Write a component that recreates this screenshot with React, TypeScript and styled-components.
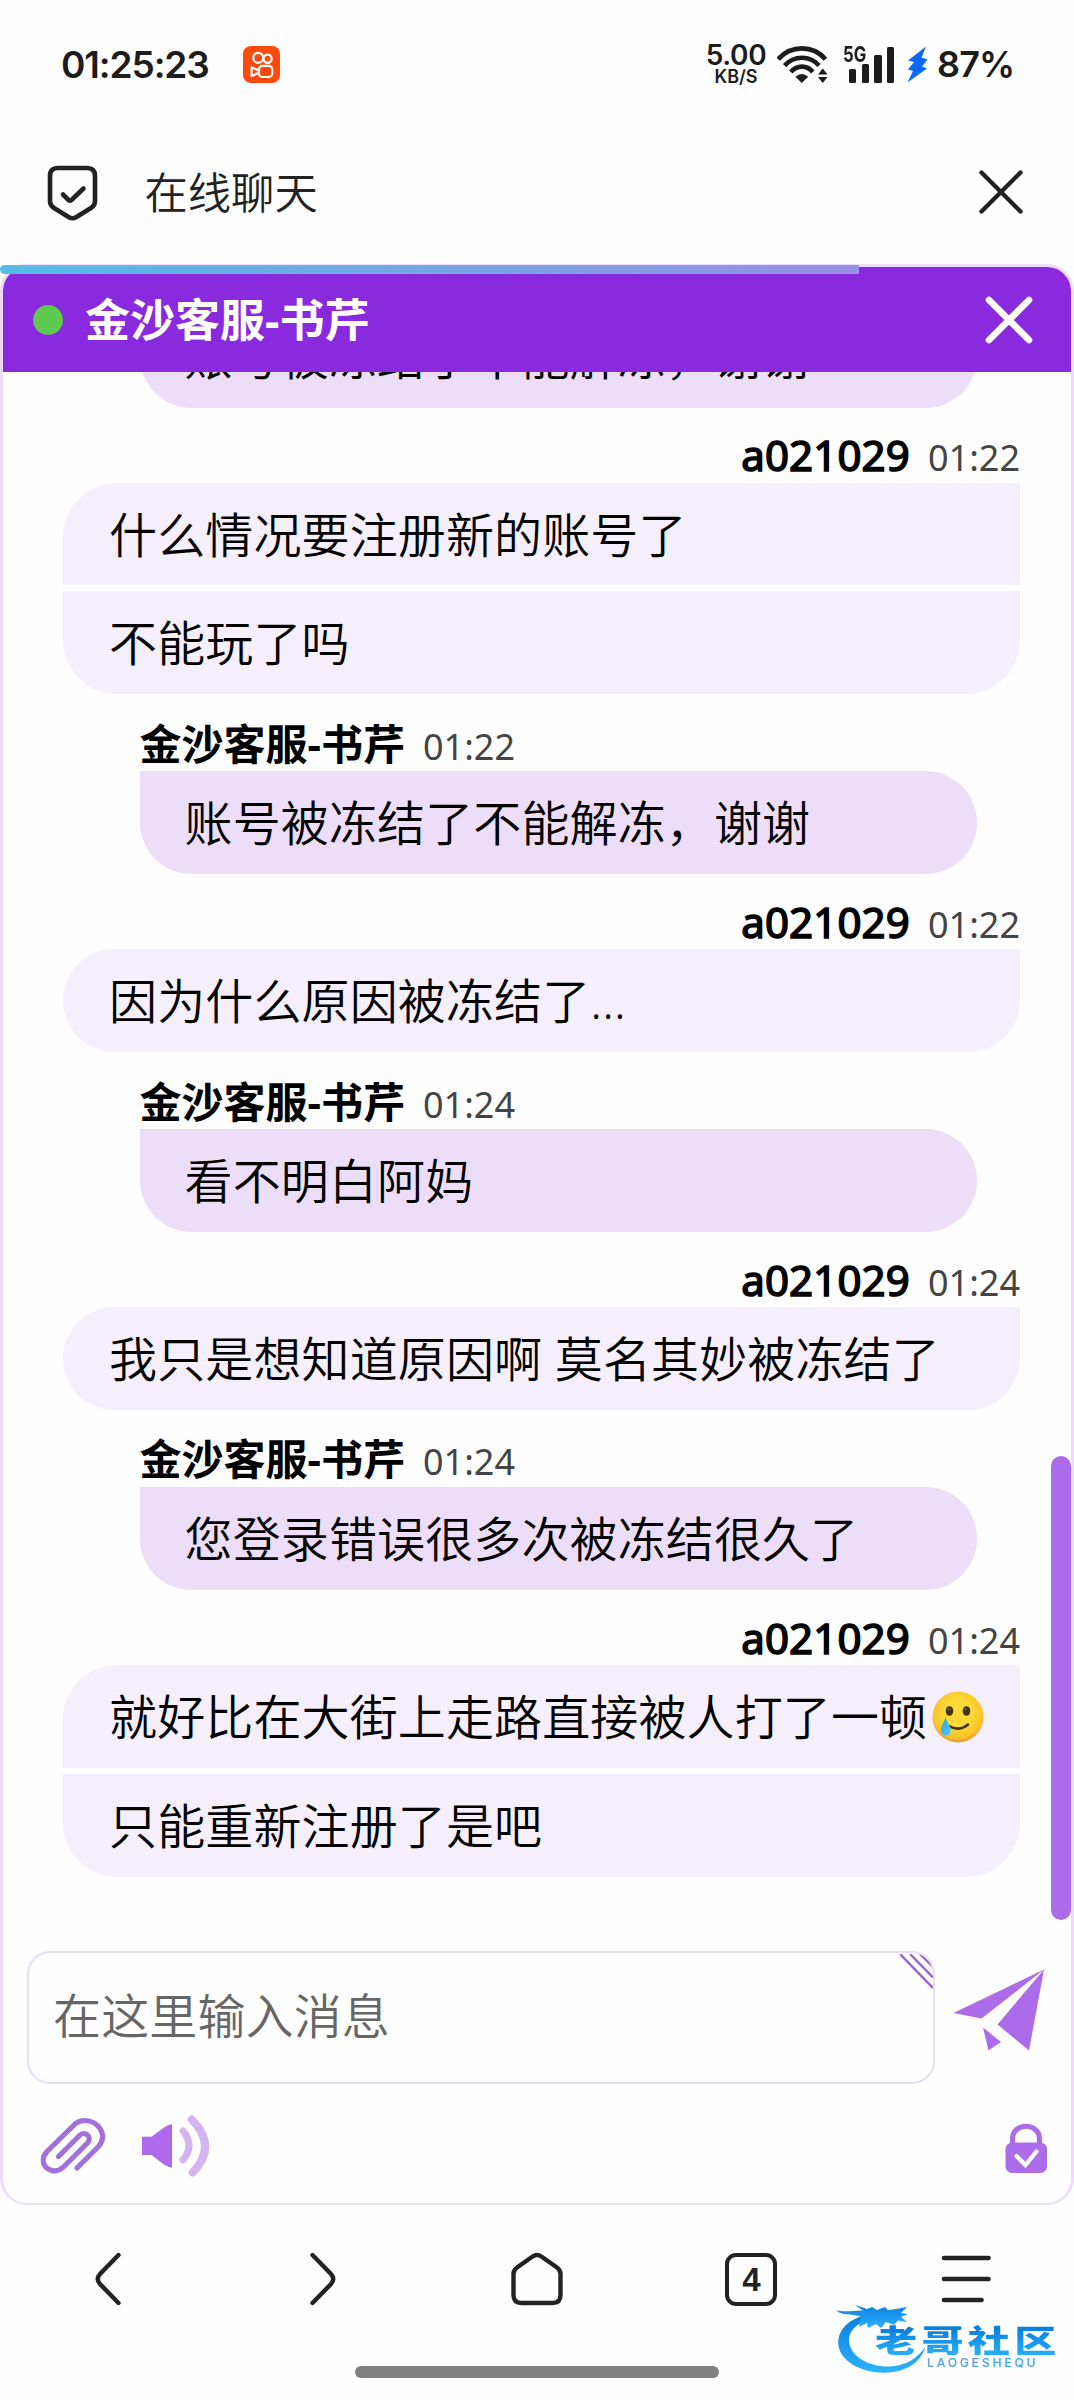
import React from 'react';
import styled, { createGlobalStyle } from 'styled-components';

const GlobalStyle = createGlobalStyle`
  * { box-sizing: border-box; }
  body { margin: 0; background: #fefefe; }
`;

const cjk = `"Noto Sans", "Noto Sans CJK SC", sans-serif`;
const ui = `Inter, "Noto Sans CJK SC", sans-serif`;
const ink = '#1c1c1c';
const violet = '#ac6be9';

const Page = styled.div`
  width: 1074px;
  height: 2400px;
  display: flex;
  flex-direction: column;
  background: #fefefe;
  font-family: ${cjk};
  overflow: hidden;
  position: relative;
`;

/* ---------- status bar ---------- */
const StatusBar = styled.div`
  height: 128px;
  padding: 0 62px 0 61px;
  display: flex;
  align-items: center;
  justify-content: space-between;
  color: ${ink};
  font-family: ${ui};
`;
const StatusSide = styled.div`
  display: flex;
  align-items: center;
`;
const Clock = styled.div`
  width: 182px;
  font-size: 37px;
  font-weight: 600;
  letter-spacing: -1.1px;
  white-space: nowrap;
`;
const Speed = styled.div`
  width: 62px;
  display: flex;
  flex-direction: column;
  align-items: center;
  white-space: nowrap;
`;
const SpeedValue = styled.span`
  font-size: 28px;
  line-height: 25px;
  font-weight: 600;
  letter-spacing: -0.4px;
`;
const SpeedUnit = styled.span`
  font-size: 18px;
  line-height: 17px;
  font-weight: 600;
`;
const Wifi = styled.svg`
  margin-left: 10px;
`;
const Signal = styled.div`
  position: relative;
  width: 52px;
  height: 37px;
  margin-left: 15px;
  display: flex;
  align-items: flex-end;
  gap: 5.3px;
  padding-left: 6px;
`;
const SignalBar = styled.span<{ $h: number }>`
  width: 7.4px;
  height: ${(p) => p.$h}px;
  border-radius: 1.5px;
  background: ${ink};
`;
const SignalLabel = styled.span`
  position: absolute;
  left: 0;
  top: -1px;
  font-size: 22px;
  line-height: 18px;
  font-weight: 700;
  transform: scaleX(0.76);
  transform-origin: 0 0;
`;
const Bolt = styled.svg`
  margin-left: 12px;
`;
const Battery = styled.div`
  width: 75px;
  font-size: 36px;
  font-weight: 600;
  letter-spacing: -0.9px;
  margin-left: 9px;
  white-space: nowrap;
`;

/* ---------- browser title bar ---------- */
const TitleBar = styled.div`
  height: 136px;
  padding: 0 50px 8px 46px;
  display: flex;
  align-items: center;
`;
const PageTitle = styled.div`
  flex: 1;
  margin: 2px 0 0 45.5px;
  font-size: 43.3px;
  line-height: 66px;
  font-weight: 350;
  color: #222;
`;
const Progress = styled.div`
  position: absolute;
  left: 0;
  top: 265px;
  width: 859px;
  height: 9px;
  border-radius: 5px 0 0 5px;
  background: linear-gradient(90deg, #54bce6, #7ba2e2 60%, #9a90e4);
`;

/* ---------- chat panel ---------- */
const Panel = styled.section`
  height: 1941px;
  display: flex;
  flex-direction: column;
  border: 3px solid #ecdcfa;
  border-bottom: 2px solid #e9e0f3;
  border-radius: 27px;
  overflow: hidden;
`;
const PanelHeader = styled.header`
  height: 105px;
  flex: none;
  padding: 0 37px 0 30px;
  display: flex;
  align-items: center;
  background: #8a2adf;
`;
const Online = styled.span`
  width: 30px;
  height: 30px;
  border-radius: 50%;
  background: #5dca4f;
  margin-top: 1px;
`;
const AgentTitle = styled.h1`
  flex: 1;
  margin: 0 0 0 22px;
  font-size: 45px;
  line-height: 68px;
  font-weight: 700;
  color: #fff;
`;
const Body = styled.div`
  position: relative;
  height: 1579px;
  flex: none;
  padding: 0 51px 74.4px 60px;
  display: flex;
  flex-direction: column;
  justify-content: flex-end;
  overflow: hidden;
`;
const Scrollbar = styled.div`
  position: absolute;
  right: 0;
  top: 1084px;
  width: 20px;
  height: 464px;
  border-radius: 10px;
  background: ${violet};
`;
const Group = styled.div<{ $agent?: boolean }>`
  flex: none;
  display: flex;
  flex-direction: column;
  gap: 6px;
  margin: ${(p) => (p.$agent ? '0 43px 0 76.5px' : '0')};
`;
const Meta = styled.div<{ $agent?: boolean }>`
  height: ${(p) => (p.$agent ? 77.4 : 75.2)}px;
  padding-top: ${(p) => (p.$agent ? 25.5 : 23.5)}px;
  margin-bottom: -6px;
  line-height: 48px;
  text-align: ${(p) => (p.$agent ? 'left' : 'right')};
  white-space: nowrap;
  color: #000;
`;
const Name = styled.span<{ $agent?: boolean }>`
  font-size: 42px;
  font-weight: ${(p) => (p.$agent ? 700 : 400)};
  letter-spacing: ${(p) => (p.$agent ? 0 : 0.15)}px;
  -webkit-text-stroke: ${(p) => (p.$agent ? 0 : 1.6)}px #000;
`;
const Time = styled.span`
  margin-left: 18px;
  font-size: 36px;
  color: #444;
`;
const Bubble = styled.div<{ $agent?: boolean; $first: boolean; $last: boolean }>`
  height: 102.7px;
  padding: 0 45px 0 ${(p) => (p.$agent ? 45 : 46)}px;
  background: ${(p) => (p.$agent ? '#ecddf8' : '#f5effc')};
  border-radius: ${(p) =>
    p.$agent
      ? '0 52px 52px 52px'
      : `${p.$first ? 54 : 0}px 0 ${p.$last ? 54 : 0}px ${p.$last ? 54 : 0}px`};
  font-size: 48px;
  line-height: 104px;
  font-weight: 350;
  letter-spacing: 0.13px;
  color: #000;
  white-space: nowrap;
`;
const Emoji = styled.svg`
  margin-left: 5px;
  vertical-align: -8px;
`;

/* ---------- composer ---------- */
const Composer = styled.div`
  flex: 1;
  padding: 0 23px 0 24px;
`;
const InputRow = styled.div`
  display: flex;
  align-items: flex-start;
`;
const Input = styled.div`
  position: relative;
  width: 908px;
  height: 133px;
  padding: 0 24px;
  border: 2px solid #e7dff1;
  border-radius: 23px;
  font-size: 48px;
  font-weight: 350;
  letter-spacing: 0.13px;
  line-height: 125px;
  color: #666;
  overflow: hidden;
`;
const Grip = styled.svg`
  position: absolute;
  right: 0;
  top: 1px;
`;
const Send = styled.svg`
  margin: 17px 0 0 18px;
`;
const Tools = styled.div`
  display: flex;
  margin-top: 27px;
  align-items: center;
`;
const Clip = styled.svg`
  margin-left: 2px;
`;
const Sound = styled.svg`
  margin: 2px 0 0 31px;
`;
const Lock = styled.svg`
  margin: 5px 0 0 auto;
`;

/* ---------- bottom navigation ---------- */
const Nav = styled.nav`
  height: 148px;
  padding: 0 1px;
  display: grid;
  grid-template-columns: repeat(5, 1fr);
  justify-items: center;
  align-items: center;
`;
const TabCount = styled.div`
  width: 52px;
  height: 53px;
  border: 4.5px solid #222;
  border-radius: 11px;
  display: flex;
  align-items: center;
  justify-content: center;
  font: 700 33px/1 "Liberation Sans", sans-serif;
  color: #222;
`;
const HomeIndicator = styled.div`
  width: 364px;
  height: 12px;
  margin: 13px auto 0;
  border-radius: 6px;
  background: #808080;
`;

const Watermark = styled.div`
  position: absolute;
  left: 834px;
  top: 2302px;
  width: 230px;
  height: 74px;
`;
const WatermarkArt = styled.svg`
  position: absolute;
  left: 0;
  top: 0;
`;
const WatermarkName = styled.div`
  position: absolute;
  left: 41px;
  top: 21px;
  font: 900 31px/32px "Noto Sans CJK SC", sans-serif;
  letter-spacing: 3.1px;
  white-space: nowrap;
  transform: scaleX(1.36);
  transform-origin: 0 0;
  color: transparent;
  background: linear-gradient(180deg, #0a80e0 20%, #25aaf6 90%);
  -webkit-background-clip: text;
  background-clip: text;
`;
const WatermarkSub = styled.div`
  position: absolute;
  left: 93px;
  top: 53.5px;
  font: 500 12px/14px Inter, sans-serif;
  letter-spacing: 2.9px;
  color: #4b9fdc;
`;

type Chat = { agent?: boolean; time: string; lines: React.ReactNode[] };

const TearFace = () => (
  <Emoji width="52" height="52" viewBox="0 0 52 52">
    <defs>
      <radialGradient id="face" cx="50%" cy="42%" r="55%">
        <stop offset="0.5" stopColor="#fdd935" />
        <stop offset="0.9" stopColor="#f9c22b" />
        <stop offset="1" stopColor="#e9a432" />
      </radialGradient>
      <linearGradient id="tear" x1="0" y1="0" x2="1" y2="1">
        <stop offset="0" stopColor="#1f9fe6" />
        <stop offset="1" stopColor="#62cdf7" />
      </linearGradient>
    </defs>
    <circle cx="26" cy="26" r="25.5" fill="url(#face)" />
    <ellipse cx="17.5" cy="20" rx="3.8" ry="4.8" fill="#47300f" />
    <ellipse cx="34.5" cy="20" rx="3.8" ry="4.8" fill="#47300f" />
    <circle cx="16.6" cy="18.3" r="1.1" fill="#8c6a2a" />
    <circle cx="33.6" cy="18.3" r="1.1" fill="#8c6a2a" />
    <path d="M17 35 Q27 41 36 33.5" fill="none" stroke="#47300f" strokeWidth="2.6" strokeLinecap="round" />
    <path d="M13.5 26 C15 32 19 35 18.8 39.5 C18.6 43.5 15.5 44.8 13.2 44.5 C10 44 8.5 41.5 8.8 38.5 C9.3 34 12.5 31 13.5 26Z" fill="url(#tear)" />
  </Emoji>
);

const chats: Chat[] = [
  { agent: true, time: '01:22', lines: ['账号被冻结了不能解冻，谢谢'] },
  { time: '01:22', lines: ['什么情况要注册新的账号了', '不能玩了吗'] },
  { agent: true, time: '01:22', lines: ['账号被冻结了不能解冻，谢谢'] },
  { time: '01:22', lines: ['因为什么原因被冻结了...'] },
  { agent: true, time: '01:24', lines: ['看不明白阿妈'] },
  { time: '01:24', lines: ['我只是想知道原因啊 莫名其妙被冻结了'] },
  { agent: true, time: '01:24', lines: ['您登录错误很多次被冻结很久了'] },
  {
    time: '01:24',
    lines: [
      <>就好比在大街上走路直接被人打了一顿<TearFace /></>,
      '只能重新注册了是吧',
    ],
  },
];

const AppBadge = () => (
  <svg width="37" height="37" viewBox="0 0 37 37">
    <rect width="37" height="37" rx="8" fill="#fb4b0c" />
    <g fill="none" stroke="#fff" strokeWidth="2.2" strokeLinejoin="round">
      <circle cx="15.2" cy="11.8" r="5" />
      <circle cx="24.6" cy="12.8" r="4.1" />
      <rect x="16" y="19.8" width="13.2" height="11.2" rx="3.6" />
      <path d="M8.6 21.4 L15.5 24.2 V27 L8.6 30Z" />
    </g>
  </svg>
);

const App = () => (
  <Page>
    <GlobalStyle />
    <StatusBar>
      <StatusSide>
        <Clock>01:25:23</Clock>
        <AppBadge />
      </StatusSide>
      <StatusSide>
        <Speed>
          <SpeedValue>5.00</SpeedValue>
          <SpeedUnit>KB/S</SpeedUnit>
        </Speed>
        <Wifi width="51" height="37" viewBox="0 0 51 37">
          <g fill="none" stroke={ink} strokeWidth="4.6">
            <path d="M1.2 13.2 C14 -1.2 36 -1.2 48.4 13.2" />
            <path d="M7.6 19.6 C17 9.2 33 9.2 42 19.6" />
            <path d="M13.8 26 C20 18.8 30 18.8 35.8 26" />
          </g>
          <path d="M18.4 30.8 Q24.8 25.4 31.2 30.8 L24.8 37Z" fill={ink} />
          <path d="M41 28.5 L45.8 22.5 L50.6 28.5Z M41 31 L45.8 37 L50.6 31Z" fill={ink} />
        </Wifi>
        <Signal>
          <SignalLabel>5G</SignalLabel>
          <SignalBar $h={13.5} />
          <SignalBar $h={18.5} />
          <SignalBar $h={27.5} />
          <SignalBar $h={36} />
        </Signal>
        <Bolt width="21" height="37" viewBox="0 0 21 37">
          <path d="M19 0.5 L1 14.5 L7 16 L1 23.5 L6 25 L0.5 36.5 L20 22.5 L15 20.5 L20.5 13.5 L14.5 11.5Z" fill="#0b68fb" />
        </Bolt>
        <Battery>87%</Battery>
      </StatusSide>
    </StatusBar>

    <TitleBar>
      <svg width="53" height="57" viewBox="0 0 53 57" fill="none" stroke="#222" strokeWidth="4.6" strokeLinecap="round" strokeLinejoin="round">
        <path d="M12 4 H41 Q49 4 49 12 V37 Q49 41.5 45 44 L30 53.2 Q26.5 55.2 23 53.2 L8 44 Q4 41.5 4 37 V12 Q4 4 12 4Z" />
        <path d="M17 30.5 L22.5 36 Q24 37.2 25.5 36 L37.5 24.5" />
      </svg>
      <PageTitle>在线聊天</PageTitle>
      <svg width="46" height="46" viewBox="0 0 46 46" stroke="#222" strokeWidth="4.4" strokeLinecap="round">
        <path d="M3.5 3.5 L42.5 42.5 M42.5 3.5 L3.5 42.5" />
      </svg>
    </TitleBar>

    <Panel>
      <PanelHeader>
        <Online />
        <AgentTitle>金沙客服-书芹</AgentTitle>
        <svg width="50" height="50" viewBox="0 0 50 50" stroke="#fff" strokeWidth="6.6" strokeLinecap="round">
          <path d="M5 5 L45 45 M45 5 L5 45" />
        </svg>
      </PanelHeader>
      <Body>
        {chats.map((c, i) => (
          <Group key={i} $agent={c.agent}>
            <Meta $agent={c.agent}>
              <Name $agent={c.agent}>{c.agent ? '金沙客服-书芹' : 'a021029'}</Name>
              <Time>{c.time}</Time>
            </Meta>
            {c.lines.map((line, j) => (
              <Bubble key={j} $agent={c.agent} $first={j === 0} $last={j === c.lines.length - 1}>
                {line}
              </Bubble>
            ))}
          </Group>
        ))}
        <Scrollbar />
      </Body>
      <Composer>
        <InputRow>
          <Input>
            在这里输入消息
            <Grip width="33" height="35" viewBox="0 0 33 35" stroke="#9b60d8" strokeWidth="2.4">
              <path d="M0 0 L33 34 M10 0 L33 23.5 M20 0 L33 13" />
            </Grip>
          </Input>
          <Send width="92" height="84" viewBox="0 0 92 84" fill={violet}>
            <path d="M0.5 45 L91 1.5 L28.5 50.5Z" />
            <path d="M91 1.5 L76 82.5 L44.5 56.5Z" />
            <path d="M30 59.5 L48 74 L35.5 82.5Z" />
          </Send>
        </InputRow>
        <Tools>
          <Clip width="80" height="66" viewBox="30 2110 80 66" fill="none" stroke="#a36fdc" strokeWidth="5.2" strokeLinecap="round" strokeLinejoin="round">
            <path d="M78 2166 L99.5 2144.5 C110 2132 98 2118.5 86 2118.5 Q80 2118.5 76 2122 L48 2149.5 C38 2161 50 2173 61 2167.5 L65 2164.5 L88.5 2141 C93.5 2135 86 2128 80.5 2133.5 L59.5 2154.5" />
          </Clip>
          <Sound width="72" height="66" viewBox="140 2113 72 66">
            <path d="M142 2136.7 H151.5 L164 2127.5 Q168 2124.5 172 2124 V2167.7 Q168 2167 164 2164.5 L151.5 2155 H142Z" fill="#af69ee" />
            <g fill="none" stroke="#d3b4f0" strokeLinecap="round">
              <path d="M183 2131 Q195 2145.5 183 2160" strokeWidth="7" />
              <path d="M191.8 2119.5 Q218 2146 192.8 2172.5" strokeWidth="8" />
            </g>
          </Sound>
          <Lock width="44" height="50" viewBox="0 0 44 50">
            <path d="M8.5 22 V16 C8.5 -1 35.5 -1 35.5 16 V22" fill="none" stroke={violet} strokeWidth="5.2" />
            <rect x="1.5" y="19.5" width="41.5" height="30.5" rx="6.5" fill={violet} />
            <path d="M12.5 33 L21.5 42 L32.5 28.5" fill="none" stroke="#fff" strokeWidth="4.2" strokeLinecap="round" />
          </Lock>
        </Tools>
      </Composer>
    </Panel>

    <Nav>
      <svg width="30" height="58" viewBox="0 0 30 58" fill="none" stroke="#222" strokeWidth="4.4" strokeLinecap="round">
        <path d="M25.5 5 L7 24 Q2.5 29 7 34 L25.5 53" />
      </svg>
      <svg width="30" height="58" viewBox="0 0 30 58" fill="none" stroke="#222" strokeWidth="4.4" strokeLinecap="round">
        <path d="M4.5 5 L23 24 Q27.5 29 23 34 L4.5 53" />
      </svg>
      <svg width="56" height="58" viewBox="0 0 56 58" fill="none" stroke="#222" strokeWidth="4.4" strokeLinejoin="round">
        <path d="M24 6.3 Q28 3.8 32 6.3 L48 17.5 Q51.5 20 51.5 24 V45 Q51.5 53 43.5 53 H12.5 Q4.5 53 4.5 45 V24 Q4.5 20 8 17.5Z" />
      </svg>
      <TabCount>4</TabCount>
      <svg width="52" height="58" viewBox="0 0 52 58" fill="none" stroke="#222" strokeWidth="4.6" strokeLinecap="round">
        <path d="M4 8 H48.5 M4 29 H48.5 M4 50 H41.5" />
      </svg>
    </Nav>
    <HomeIndicator />

    <Watermark>
      <WatermarkArt width="230" height="74" viewBox="0 0 230 74">
        <defs>
          <linearGradient id="dragon" x1="0" y1="0" x2="0" y2="1">
            <stop offset="0" stopColor="#0a7fe0" />
            <stop offset="1" stopColor="#2cb2fb" />
          </linearGradient>
        </defs>
        <g fill="url(#dragon)">
          <path d="M28 14 C10 20 2 32 5 46 C9 62 32 72 55 70.5 C75 69 88 58 91 45 C84 56 72 64 55 64.5 C34 65 16 54 15 39 C14.5 29 22 21 38 17Z" />
          <path d="M2 8 C12 11 20 8 29 8.5 L21 3 L33 7 L38 5 L43 8 L51 5 L54 8 L62 7 L73 5 L67 11 L74 12 L67 15 L73 20 L64 18.500 L60 23 L52 20 L47 26 L42 22 L34 26 L33 21 L25 25 L27 15 C20 11 9 15 2 8Z" />
        </g>
      </WatermarkArt>
      <WatermarkName>老哥社区</WatermarkName>
      <WatermarkSub>LAOGESHEQU</WatermarkSub>
    </Watermark>
    <Progress />
  </Page>
);

export default App;
